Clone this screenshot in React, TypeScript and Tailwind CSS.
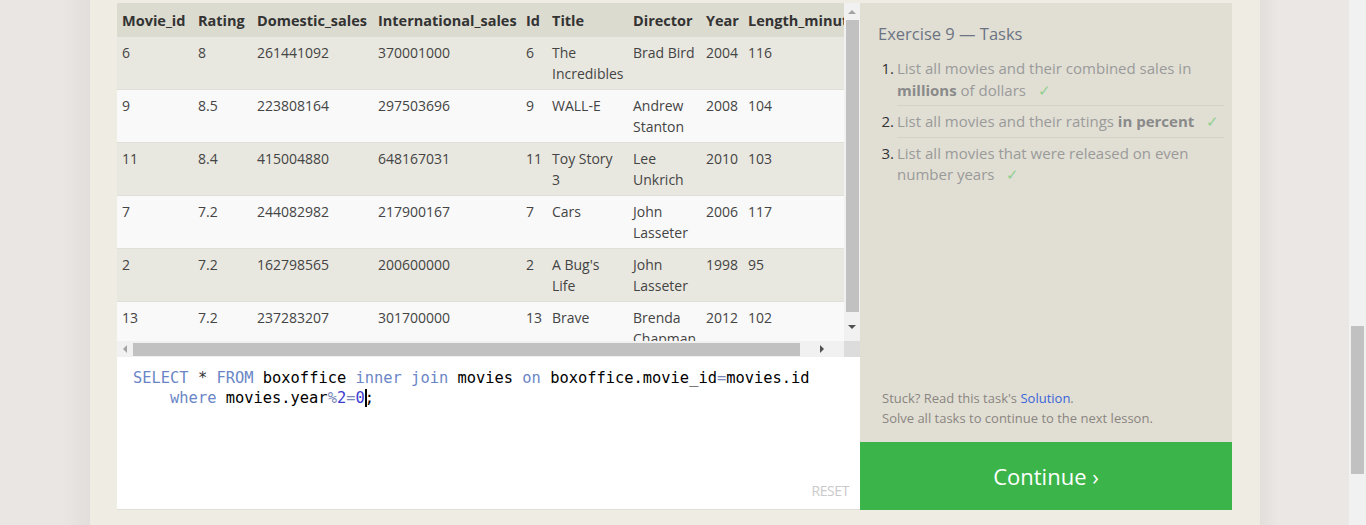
import React from "react";

type Row = {
  movieId: string;
  rating: string;
  domestic: string;
  intl: string;
  id: string;
  title: string[];
  director: string[];
  year: string;
  length: string;
};

const rows: Row[] = [
  { movieId: "6", rating: "8", domestic: "261441092", intl: "370001000", id: "6", title: ["The", "Incredibles"], director: ["Brad Bird"], year: "2004", length: "116" },
  { movieId: "9", rating: "8.5", domestic: "223808164", intl: "297503696", id: "9", title: ["WALL-E"], director: ["Andrew", "Stanton"], year: "2008", length: "104" },
  { movieId: "11", rating: "8.4", domestic: "415004880", intl: "648167031", id: "11", title: ["Toy Story", "3"], director: ["Lee", "Unkrich"], year: "2010", length: "103" },
  { movieId: "7", rating: "7.2", domestic: "244082982", intl: "217900167", id: "7", title: ["Cars"], director: ["John", "Lasseter"], year: "2006", length: "117" },
  { movieId: "2", rating: "7.2", domestic: "162798565", intl: "200600000", id: "2", title: ["A Bug's", "Life"], director: ["John", "Lasseter"], year: "1998", length: "95" },
  { movieId: "13", rating: "7.2", domestic: "237283207", intl: "301700000", id: "13", title: ["Brave"], director: ["Brenda", "Chapman"], year: "2012", length: "102" },
];

const columns = [
  { label: "Movie_id", w: "w-[76px]" },
  { label: "Rating", w: "w-[59px]" },
  { label: "Domestic_sales", w: "w-[121px]" },
  { label: "International_sales", w: "w-[148px]" },
  { label: "Id", w: "w-[26px]" },
  { label: "Title", w: "w-[81px]" },
  { label: "Director", w: "w-[73px]" },
  { label: "Year", w: "w-[42px]" },
  { label: "Length_minutes", w: "w-[129px]" },
];

function Lines({ lines }: { lines: string[] }) {
  return (
    <>
      {lines.map((l, i) => (
        <div key={i}>{l}</div>
      ))}
    </>
  );
}

function Arrow({ dir, dark }: { dir: "up" | "down" | "left" | "right"; dark?: boolean }) {
  const pts = {
    up: "0,4 4,0 8,4",
    down: "0,0 8,0 4,4",
    left: "4,0 4,8 0,4",
    right: "0,0 0,8 4,4",
  }[dir];
  const vertical = dir === "up" || dir === "down";
  return (
    <svg width={vertical ? 8 : 4} height={vertical ? 4 : 8} viewBox={vertical ? "0 0 8 4" : "0 0 4 8"}>
      <polygon points={pts} fill={dark ? "#505050" : "#a3a3a3"} />
    </svg>
  );
}

function ResultTable() {
  const td = "px-[5px] pt-[5px] pb-[5px]";
  return (
    <div className="flex flex-col">
      <div className="flex h-[338px]">
        <div className="w-[727px] overflow-hidden">
          <table className="table-fixed border-collapse w-[755px] text-[14px] leading-[21px] text-[#444]">
            <thead>
              <tr className="bg-[#dcdbd0]">
                {columns.map((c) => (
                  <th key={c.label} className={`${c.w} text-left font-bold text-[14.5px] text-[#333] whitespace-nowrap px-[5px] pt-[7px] pb-[6px]`}>
                    {c.label}
                  </th>
                ))}
              </tr>
            </thead>
            <tbody>
              {rows.map((r, i) => (
                <tr key={i} className={`${i % 2 === 0 ? "bg-[#e9e8e0]" : "bg-[#f9f9f9]"} border-b border-[#e0dfd9] align-top`}>
                  <td className={td}>{r.movieId}</td>
                  <td className={td}>{r.rating}</td>
                  <td className={td}>{r.domestic}</td>
                  <td className={td}>{r.intl}</td>
                  <td className={td}>{r.id}</td>
                  <td className={`${td} whitespace-nowrap`}>
                    <Lines lines={r.title} />
                  </td>
                  <td className={`${td} whitespace-nowrap`}>
                    <Lines lines={r.director} />
                  </td>
                  <td className={td}>{r.year}</td>
                  <td className={td}>{r.length}</td>
                </tr>
              ))}
            </tbody>
          </table>
        </div>
        {/* vertical scrollbar */}
        <div className="w-[16px] bg-[#f1f1f1] flex flex-col items-center">
          <div className="h-[17px] flex items-center justify-center">
            <Arrow dir="up" />
          </div>
          <div className="w-[13px] h-[292px] bg-[#c1c1c1]" />
          <div className="flex-1 flex items-center justify-center">
            <Arrow dir="down" dark />
          </div>
        </div>
      </div>
      {/* horizontal scrollbar */}
      <div className="flex h-[16px]">
        <div className="w-[727px] bg-[#f1f1f1] flex items-center">
          <div className="w-[16px] flex items-center justify-center">
            <Arrow dir="left" />
          </div>
          <div className="w-[667px] h-[13px] bg-[#c1c1c1]" />
          <div className="flex-1 flex items-center justify-center">
            <Arrow dir="right" dark />
          </div>
        </div>
        <div className="w-[16px] bg-[#dcdcdc]" />
      </div>
    </div>
  );
}

function Editor() {
  const kw = "text-[#6a86c6]";
  const op = "text-[#7a88b8]";
  const num = "text-[#3a3ad0]";
  return (
    <div className="relative flex-1 bg-white border-b border-[#e2dfd6] pl-[16px] pt-[11px] font-['DejaVu_Sans_Mono',monospace] text-[15.4px] leading-[20px] text-black whitespace-pre">
      <div>
        <span className={kw}>SELECT</span> <span className="text-[#333]">*</span> <span className={kw}>FROM</span> boxoffice{" "}
        <span className={kw}>inner</span> <span className={kw}>join</span> movies <span className={kw}>on</span> boxoffice.movie_id
        <span className={op}>=</span>movies.id
      </div>
      <div>
        {"    "}
        <span className={kw}>where</span> movies.year<span className={op}>%</span>
        <span className={num}>2</span>
        <span className={op}>=</span>
        <span className={num}>0</span>
        <span className="inline-block w-[2px] h-[18px] bg-black align-[-4px] -mr-[2px]" />;
      </div>
      <div className="absolute right-[11px] bottom-[8px] font-['Open_Sans',sans-serif] text-[14px] text-[#cacaca] tracking-[-0.4px]">
        RESET
      </div>
    </div>
  );
}

function TaskItem({ n, children, last }: { n: number; children: React.ReactNode; last?: boolean }) {
  return (
    <li className="flex">
      <span className="w-[19px] shrink-0 text-[#333] text-right pr-[3px] pt-[5px]">{n}.</span>
      <div className={`flex-1 pt-[5px] pb-[4px] ${last ? "" : "border-b border-[#d4d2c7]"}`}>{children}</div>
    </li>
  );
}

function TasksPanel() {
  const check = <span className="ml-[8px] text-[#8fd08f]">✓</span>;
  return (
    <div className="flex flex-col w-[372px]">
      <div className="h-[439px] bg-[#e1dfd4] pl-[18px] pr-[8px] pt-[19px] flex flex-col">
        <div className="text-[16.5px] leading-[24px] text-[#6c7382]">Exercise 9 — Tasks</div>
        <ol className="mt-[7px] text-[15px] leading-[21.5px] text-[#9a9a9a]">
          <TaskItem n={1}>
            List all movies and their combined sales in <b className="text-[#8a8a8a]">millions</b> of dollars {check}
          </TaskItem>
          <TaskItem n={2}>
            List all movies and their ratings <b className="text-[#8a8a8a]">in percent</b> {check}
          </TaskItem>
          <TaskItem n={3} last>
            List all movies that were released on even number years {check}
          </TaskItem>
        </ol>
        <div className="mt-auto mb-[14px] pl-[4px] text-[13px] leading-[19.5px] text-[#8a8580]">
          <div>
            Stuck? Read this task's <span className="text-[#3a64d8]">Solution</span>.
          </div>
          <div>Solve all tasks to continue to the next lesson.</div>
        </div>
      </div>
      <div className="h-[68px] bg-[#3bb54a] flex items-center justify-center text-white text-[22px]">Continue ›</div>
    </div>
  );
}

export default function App() {
  return (
    <div className="h-[525px] w-[1366px] overflow-hidden flex font-['Open_Sans',sans-serif]">
      <div className="w-[90px] bg-[linear-gradient(to_left,#e2dedb,#eae6e3_28px)]" />
      <div className="w-[1170px] bg-[#efece4] pl-[27px] pt-[3px]">
        <div className="flex h-[507px]">
          <div className="w-[743px] flex flex-col">
            <ResultTable />
            <Editor />
          </div>
          <TasksPanel />
        </div>
      </div>
      <div className="w-[89px] bg-[linear-gradient(to_right,#e1dedb,#ebe7e4_18px)]" />
      <div className="w-[17px] bg-[#f1f1f1] flex flex-col">
        <div className="h-[326px]" />
        <div className="ml-[2px] w-[13px] h-[148px] bg-[#c1c1c1]" />
      </div>
    </div>
  );
}
